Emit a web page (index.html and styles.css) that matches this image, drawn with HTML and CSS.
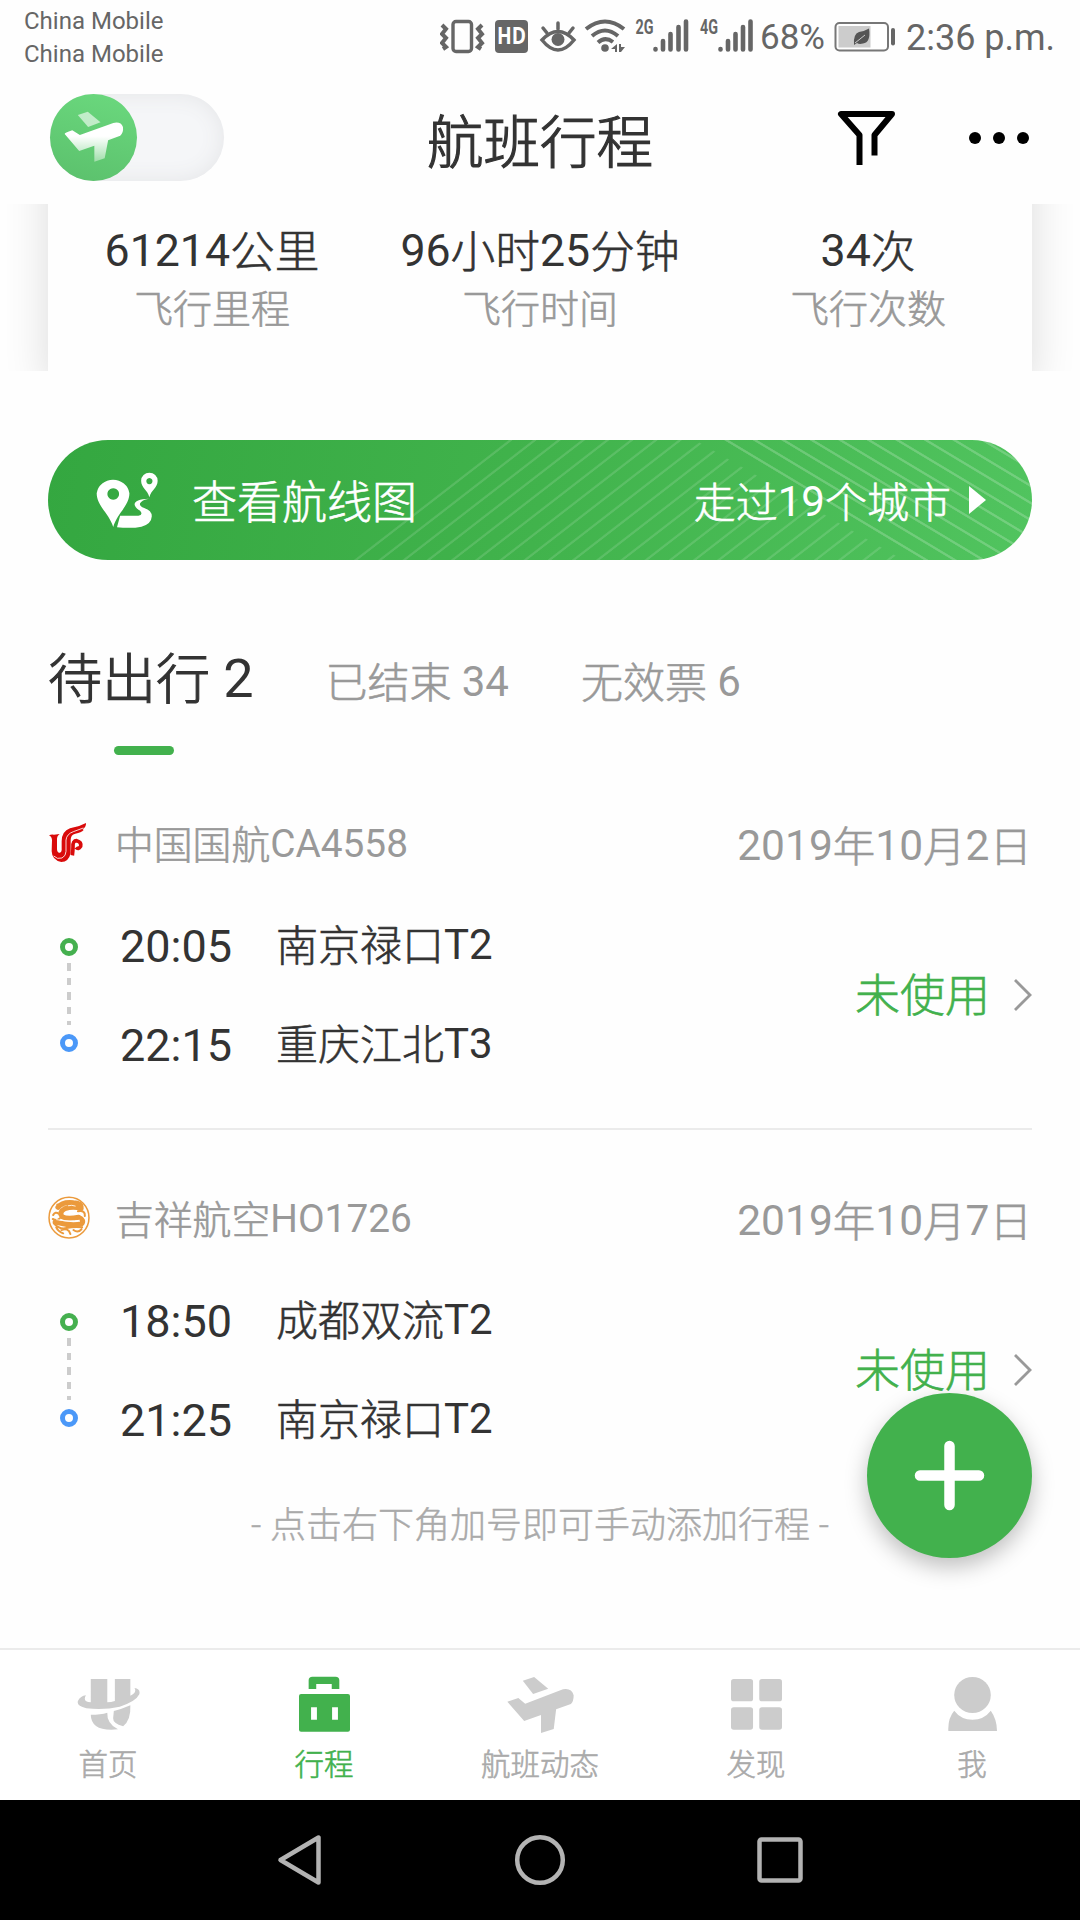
FILE: index.html
```html
<!DOCTYPE html>
<html lang="zh-CN">
<head>
<meta charset="utf-8">
<title>航班行程</title>
<link rel="stylesheet" href="styles.css">
</head>
<body>
<div class="screen">
  <div class="status">
    <div class="carriers"><span>China Mobile</span><span>China Mobile</span></div>
    <svg class="status-icons" width="320" height="40" viewBox="440 16 320 40">
      <g fill="none" stroke="#666" stroke-width="3.400">
        <rect x="453" y="21.500" width="18.500" height="30" rx="3"/>
        <path d="M442 25l4 4-4 5 4 4-4 5 4 4-3 2M482 25l-4 4 4 5-4 4 4 5-4 4 3 2" stroke-width="4"/>
      </g>
      <rect x="495" y="20" width="33" height="33" rx="4" fill="#666"/>
      <text x="497" y="44" class="hd" textLength="29" lengthAdjust="spacingAndGlyphs">HD</text>
      <g fill="none" stroke="#666" stroke-width="3.500" stroke-linecap="round">
        <path d="M542 40Q558 23 574 40Q558 60 542 40z"/>
        <path d="M558 23v6M543 28l4 5M573 28l-4 5"/>
      </g>
      <circle cx="558" cy="39.500" r="6.500" fill="#666"/>
      <g fill="none" stroke="#666" stroke-width="4">
        <path d="M586 29Q605 14 624 29M592 36Q605 25 618 36M598 42.500Q605 36 613 42"/>
      </g>
      <circle cx="605" cy="48" r="3.800" fill="#666"/>
      <path d="M617 44v8h-2v-3h-4zM619 44v8h2l4-5h-4v-3z" fill="#666"/>
      <text x="635.500" y="34" class="net" textLength="18" lengthAdjust="spacingAndGlyphs">2G</text>
      <text x="700" y="34" class="net" textLength="18" lengthAdjust="spacingAndGlyphs">4G</text>
      <g stroke="#666" stroke-width="4.600" stroke-linecap="round">
        <path d="M655.500 49v.5M663 41v8.500M670.500 34v15.500M678.500 27v22.500M686 21.500v28"/>
        <path d="M720.500 49v.5M728 41v8.500M735.500 34v15.500M743 27v22.500M750.500 21.500v28"/>
      </g>
    </svg>
    <span class="pct">68%</span>
    <svg class="battery" width="62" height="32" viewBox="834 21 62 32">
      <rect x="835.500" y="23" width="52.500" height="27.500" rx="4" fill="#fff" stroke="#777" stroke-width="2"/>
      <rect x="838.500" y="26" width="32" height="21.500" fill="#ccc"/>
      <rect x="891" y="28" width="4" height="17.500" rx="2" fill="#666"/>
      <path d="M869 28.500q2 14-6 15-4 1-6-.5l-3 2q-1-11 5-13 6-1 10-3.500z" fill="#555"/>
      <path d="M855 43l10-8" stroke="#ccc"/>
    </svg>
    <span class="time">2:36 p.m.</span>
  </div>

  <header class="header">
    <div class="toggle">
      <div class="knob">
        <svg width="60" height="52" viewBox="187 337 174 156" preserveAspectRatio="none">
          <defs><linearGradient id="pl" x1="0" y1="0" x2="0" y2="1"><stop offset=".35" stop-color="#fff"/><stop offset="1" stop-color="#fff" stop-opacity=".4"/></linearGradient></defs>
          <path d="M227 349L256 339 293 371 257 385z" fill="#fff" opacity=".6"/>
          <path d="M189 406Q188 403 211 395L233 409 330 373Q352 368 358 385 360 402 350 411L315 425 305 479 275 489V441L231 457z" fill="url(#pl)"/>
        </svg>
      </div>
    </div>
    <h1 class="title">航班行程</h1>
    <div class="actions">
      <svg width="58" height="56" viewBox="837 110 58 56" fill="none" stroke="#000" stroke-width="6">
        <path d="M859.500 165V135L841 114H892L874.500 135V155.500" stroke-linejoin="round"/>
      </svg>
      <svg width="62" height="14" viewBox="968 131 62 14"><circle cx="975" cy="138" r="6"/><circle cx="999" cy="138" r="6"/><circle cx="1023" cy="138" r="6"/></svg>
    </div>
  </header>

  <main class="main">
    <div class="stats-wrap">
      <section class="stats">
        <div class="stat"><b><i>61214</i>公里</b><span>飞行里程</span></div>
        <div class="stat"><b><i>96</i>小时<i>25</i>分钟</b><span>飞行时间</span></div>
        <div class="stat"><b><i>34</i>次</b><span>飞行次数</span></div>
      </section>
    </div>

    <section class="banner">
      <svg class="banner-lines" width="984" height="120" viewBox="0 0 984 120">
        <defs>
          <pattern id="rise" x="451" y="0" width="24.200" height="120" patternUnits="userSpaceOnUse" patternTransform="skewX(-52.250)"><rect x="10" width="3.600" height="120" fill="#fff" opacity=".13"/></pattern>
          <pattern id="fall" x="665" y="0" width="28.500" height="120" patternUnits="userSpaceOnUse" patternTransform="skewX(59.040)"><rect x="11" width="4.500" height="120" fill="#fff" opacity=".2"/></pattern>
        </defs>
        <path d="M453 0H647L855 120H298z" fill="url(#rise)"/>
        <path d="M673 0H984V120H873z" fill="url(#fall)"/>
      </svg>
      <svg class="route" width="62" height="56" viewBox="280 815 180 166" preserveAspectRatio="none" fill="#fff">
        <path fill-rule="evenodd" d="M330 978C318 938 282 915 282 878A48 47 0 0 1 377 878C377 915 341 938 330 978zM330 863a17 17 0 1 0 .1 0z"/>
        <path fill-rule="evenodd" d="M435 890C430 868 411 862 411 841A24 24 0 0 1 459 841C459 862 440 868 435 890zM435 833a9 9 0 1 0 .1 0z"/>
        <path d="M434 894Q392 896 392 911 393 920 408 930 418 942 403 945L350 945 341 979Q385 983 412 977 441 969 442 946 442 930 420 922 405 915 408 908 412 898 434 894z"/>
      </svg>
      <span class="banner-title">查看航线图</span>
      <span class="banner-cities">走过<i>19</i>个城市</span>
      <svg class="play" width="17" height="28" viewBox="0 0 17 28"><path d="M0 0L17 14 0 28z" fill="#fff"/></svg>
    </section>

    <nav class="tabs">
      <span class="tab tab-on">待出行 <i>2</i></span>
      <span class="tab">已结束 <i>34</i></span>
      <span class="tab">无效票 <i>6</i></span>
    </nav>
    <div class="tab-line"></div>

    <article class="flight">
      <div class="flight-head">
        <svg class="logo" width="42" height="42" viewBox="24 30 126 126" fill="none" stroke="#d90b0b">
          <path d="M27 70Q34 66 42 68L59 66Q50 72 51 84V112Q52 124 60 122 66 120 65 108V88Q65 58 90 49 116 45 138 33 139 44 128 52L131 54Q124 62 106 65 92 68 92 84V124Q86 150 64 150 36 145 35 118L36 84Q35 73 27 70z" fill="#d90b0b" stroke="none"/>
          <path d="M97 130Q99 118 99 104 98 86 110 86 125 90 122 103 115 114 108 106" stroke-width="11"/>
          <path d="M41 132Q52 143 66 138 78 132 78 118V84Q80 66 100 59L130 48" stroke="#fff" stroke-width="2.500"/>
        </svg>
        <span class="carrier">中国国航<i>CA4558</i></span>
        <span class="date"><i>2019</i>年<i>10</i>月<i>2</i>日</span>
      </div>
      <div class="flight-body">
        <div class="rail"><span class="dot"></span><span class="dash"></span><span class="dot dot-to"></span></div>
        <div class="legs">
          <span class="clock">20:05</span><span class="port">南京禄口<i>T2</i></span>
          <span class="clock">22:15</span><span class="port">重庆江北<i>T3</i></span>
        </div>
        <div class="state">未使用</div>
        <svg class="chev" width="19" height="34" viewBox="0 0 19 34" fill="none" stroke="#999" stroke-width="2.800"><path d="M2 2L17 17 2 32"/></svg>
      </div>
    </article>

    <hr class="rule">

    <article class="flight">
      <div class="flight-head">
        <svg class="logo" width="42" height="43" viewBox="141 46 122 129" preserveAspectRatio="none" fill="none" stroke="#eb9a3c" stroke-linecap="round">
          <ellipse cx="202" cy="111" rx="58" ry="61" stroke-width="4.500"/>
          <path d="M170 80Q183 62 215 66 238 66 237 82M237 84Q215 76 190 84 172 94 182 108 195 116 230 110 248 118 238 130 205 136 162 124" stroke-width="15"/>
          <path d="M156 103Q162 92 172 99M158 128Q175 148 195 142 215 138 240 140M180 148Q200 140 206 160M165 140Q170 152 185 158M215 148Q228 158 238 146M228 92Q250 88 248 106M168 72Q176 76 180 72M155 115Q168 122 175 113" stroke-width="6"/>
          <path d="M188 100Q206 95 226 99M166 117Q205 124 232 119M200 75Q210 72 220 76" stroke="#fff" stroke-width="2.500"/>
        </svg>
        <span class="carrier">吉祥航空<i>HO1726</i></span>
        <span class="date"><i>2019</i>年<i>10</i>月<i>7</i>日</span>
      </div>
      <div class="flight-body">
        <div class="rail"><span class="dot"></span><span class="dash"></span><span class="dot dot-to"></span></div>
        <div class="legs">
          <span class="clock">18:50</span><span class="port">成都双流<i>T2</i></span>
          <span class="clock">21:25</span><span class="port">南京禄口<i>T2</i></span>
        </div>
        <div class="state">未使用</div>
        <svg class="chev" width="19" height="34" viewBox="0 0 19 34" fill="none" stroke="#999" stroke-width="2.800"><path d="M2 2L17 17 2 32"/></svg>
      </div>
    </article>

    <p class="hint">- 点击右下角加号即可手动添加行程 -</p>
    <div class="fab">
      <svg width="71" height="71" viewBox="0 0 71 71" stroke="#fff" stroke-width="10.500" stroke-linecap="round"><path d="M35.500 6V65M6 35.500H65"/></svg>
    </div>
  </main>

  <footer class="tabbar">
    <div class="item">
      <svg width="63" height="58" viewBox="221 108 183 174" preserveAspectRatio="none" fill="#ccc">
        <path d="M261 117H309V187Q320 187 331 183V117H376V167Q396 157 388 144 406 147 402 163 392 185 345 200 300 211 248 205 218 198 224 182 231 168 247 166 236 185 261 187z"/>
        <path d="M261 224Q290 224 309 218 307 250 340 268 262 276 261 224zM328 213Q352 207 376 196 378 240 355 259 325 250 326 235z"/>
      </svg>
      <span>首页</span>
    </div>
    <div class="item item-on">
      <svg width="51" height="58" viewBox="868 108 148 174" preserveAspectRatio="none">
        <path d="M907 147V121H974V147" fill="none" stroke="#42b14d" stroke-width="22" stroke-linejoin="round"/>
        <path fill-rule="evenodd" fill="#42b14d" d="M874 162H1010Q1016 162 1016 168V269Q1016 275 1010 275H874Q868 275 868 269V168Q868 162 874 162zM903 202V239H920V202zM964 202V239H981V202z"/>
      </svg>
      <span>行程</span>
    </div>
    <div class="item">
      <svg width="67" height="58" viewBox="1472 108 195 174" preserveAspectRatio="none" fill="#ccc">
        <path d="M1518 122L1551 111 1592 146 1548 162z"/>
        <path d="M1473 185L1505 174 1525 191 1635 148Q1660 143 1666 166 1666 185 1658 192L1615 208 1608 267 1571 279V225L1522 243z"/>
      </svg>
      <span>航班动态</span>
    </div>
    <div class="item">
      <svg width="51" height="58" viewBox="555 108 148 174" preserveAspectRatio="none" fill="#ccc">
        <rect x="555" y="117" width="64" height="67" rx="8"/><rect x="637" y="117" width="66" height="67" rx="8"/>
        <rect x="555" y="202" width="64" height="67" rx="8"/><rect x="637" y="202" width="66" height="67" rx="8"/>
      </svg>
      <span>发现</span>
    </div>
    <div class="item">
      <svg width="49" height="58" viewBox="1185 108 142 174" preserveAspectRatio="none" fill="#ccc">
        <ellipse cx="1256" cy="165" rx="53" ry="54"/>
        <path d="M1203 212Q1223 239 1256 239 1289 239 1309 212 1327 238 1327 273H1186Q1184 235 1203 212z"/>
      </svg>
      <span>我</span>
    </div>
  </footer>

  <div class="sysnav">
    <svg width="526" height="54" viewBox="277 1833 526 54" fill="none" stroke="#b3b3b3" stroke-width="4.500" stroke-linejoin="round">
      <path d="M280.500 1860L318.500 1837.500V1882.500z"/>
      <circle cx="540" cy="1860" r="22.800"/>
      <rect x="759.500" y="1839.500" width="41" height="41" rx="2"/>
    </svg>
  </div>
</div>
</body>
</html>
```
FILE: styles.css
```css
* { box-sizing: border-box; }
body { margin: 0; background: #fff; }
/* Latin runs inside Chinese labels: regular weight, raised slightly off the CJK baseline */
i { font-style: normal; font-weight: 400; line-height: 1; vertical-align: 2px; -webkit-text-stroke: 0; }
svg { display: block; flex: none; }

.screen {
  width: 1080px;
  height: 1920px;
  display: flex;
  flex-direction: column;
  overflow: hidden;
  background: #fefefe;
  color: #333;
  font-family: Roboto, "Noto Sans CJK SC", sans-serif;
  font-weight: 300;
  -webkit-text-stroke: .6px;
  white-space: nowrap;
}

/* system status bar */
.status {
  height: 72px;
  display: flex;
  align-items: flex-start;
  color: #666;
  font-weight: 400;
  -webkit-text-stroke: 0;
}
.carriers {
  width: 416px;
  padding: 5px 0 0 24px;
  display: flex;
  flex-direction: column;
  font-size: 24px;
  line-height: 33px;
}
.status-icons { margin: 16px 0 0 24px; }
.pct, .time { font-size: 35px; line-height: 52px; padding-top: 12px; }
.pct { width: 74px; }
.battery { margin-top: 21px; }
.time { margin-left: 10px; font-size: 36px; }
.hd { font: 700 24px "Open Sans", sans-serif; fill: #fff; }
.net { font: 700 20px Roboto, sans-serif; fill: #666; }

/* app header */
.header {
  height: 132px;
  padding: 0 50px 2px;
  display: grid;
  grid-template-columns: 1fr auto 1fr;
  align-items: center;
}
.toggle {
  width: 174px;
  height: 87px;
  border-radius: 44px;
  background: #f5f6f8;
  box-shadow: inset 0 0 22px #e4e5e7;
}
.knob {
  width: 87px;
  height: 87px;
  border-radius: 50%;
  background: linear-gradient(195deg, #6bd97e, #5bc06c);
  display: flex;
  align-items: center;
  justify-content: center;
}
.title { margin: 13px 0 0; font-size: 56.500px; line-height: 80px; font-weight: 300; -webkit-text-stroke: 1.200px; }
.actions { display: flex; justify-content: flex-end; align-items: center; gap: 73px; padding-top: 2px; }

/* scrolling content */
.main {
  position: relative;
  height: 1444px;
  padding: 0 48px;
  display: flex;
  flex-direction: column;
}
.stats-wrap {
  margin: 0 -48px;
  padding: 0 48px;
  height: 167px;
  overflow: hidden;
}
/* the card is taller than its viewport, so only its side shadows show */
.stats {
  height: 250px;
  margin-top: -60px;
  padding-top: 60px;
  display: grid;
  grid-template-columns: repeat(3, 1fr);
  align-items: start;
  box-shadow: 0 -6px 42px rgba(0, 0, 0, .14);
  background: #fefefe;
}
.stat { display: flex; flex-direction: column; align-items: center; padding-top: 19px; }
.stat b { font-size: 44.700px; line-height: 60px; font-weight: 300; }
.stat span { font-size: 39px; line-height: 54px; color: #999; }

.banner {
  position: relative;
  height: 120px;
  margin-top: 69px;
  padding: 0 46px 0 49px;
  border-radius: 60px;
  overflow: hidden;
  display: flex;
  align-items: center;
  color: #fff;
  background: linear-gradient(100deg, #34a740, #41b34c 50%, #51c45f);
}
.banner-lines { position: absolute; left: 0; top: 0; }
.route { margin-left: -1px; }
.banner-title { position: relative; margin: 8px 0 0 34px; font-size: 45px; line-height: 60px; }
.banner-cities { position: relative; margin: 8px 18px 0 auto; font-size: 42px; line-height: 60px; }
.play { position: relative; }

.tabs { margin-top: 88px; height: 60px; display: flex; align-items: flex-start; gap: 72px; }
.tab { padding-top: 6px; font-size: 42px; line-height: 60px; color: #999; }
.tab-on { padding-top: 3px; font-size: 54px; color: #333; -webkit-text-stroke: 1.100px; }
.tab-line { width: 60px; height: 9px; margin: 38px 0 0 66px; border-radius: 5px; background: #42b14d; }

.flight { margin-top: 59px; }
.flight-head { height: 60px; display: flex; align-items: center; color: #999; }
.logo { margin-top: -3px; }
.carrier { margin: 3px 0 0 25px; font-size: 38.800px; line-height: 60px; }
.date { margin: 7px 0 0 auto; font-size: 42.500px; line-height: 60px; }
.flight-body { margin-top: 23px; height: 198px; display: flex; align-items: center; }
.rail { width: 42px; height: 114px; margin-top: -2px; display: flex; flex-direction: column; align-items: center; }
.dot { width: 18px; height: 18px; border: 5px solid #45b04f; border-radius: 50%; background: #fff; }
.dot-to { border-color: #4b98f8; }
.dash {
  width: 4px;
  height: 62px;
  margin: 7px 0 9px;
  background: repeating-linear-gradient(#ccc 0 7.500px, transparent 7.500px 14.500px);
}
.legs {
  margin-left: 30px;
  display: grid;
  grid-template-columns: 156px auto;
  grid-auto-rows: 99px;
  align-items: center;
}
.clock { font-size: 45px; line-height: 60px; font-weight: 400; -webkit-text-stroke: 0; }
.port { font-size: 42px; line-height: 60px; }
.state { margin: 2px 0 0 auto; font-size: 45px; line-height: 60px; color: #42b14d; }
.chev { margin: -2px 0 0 23px; }
.rule { width: 100%; height: 2px; margin: 33px 0 0; border: 0; background: #ebebeb; flex: none; }
.hint { margin: 26px 0 0; text-align: center; font-size: 36px; line-height: 60px; color: #aaa; -webkit-text-stroke: .4px; }
.fab {
  position: absolute;
  right: 48px;
  top: 1189px;
  width: 165px;
  height: 165px;
  border-radius: 50%;
  background: #42b14d;
  box-shadow: 0 9px 22px rgba(0, 0, 0, .25);
  display: flex;
  align-items: center;
  justify-content: center;
}

/* bottom tab bar */
.tabbar {
  height: 152px;
  border-top: 2px solid #ebebeb;
  display: grid;
  grid-template-columns: repeat(5, 1fr);
  background: #fff;
}
.item { display: flex; flex-direction: column; align-items: center; padding-top: 26px; font-size: 29.500px; color: #aaa; }
.item span { margin-top: 11px; line-height: 40px; }
.item-on { color: #42b14d; }

.sysnav { height: 120px; background: #000; display: flex; align-items: center; justify-content: center; }
```
